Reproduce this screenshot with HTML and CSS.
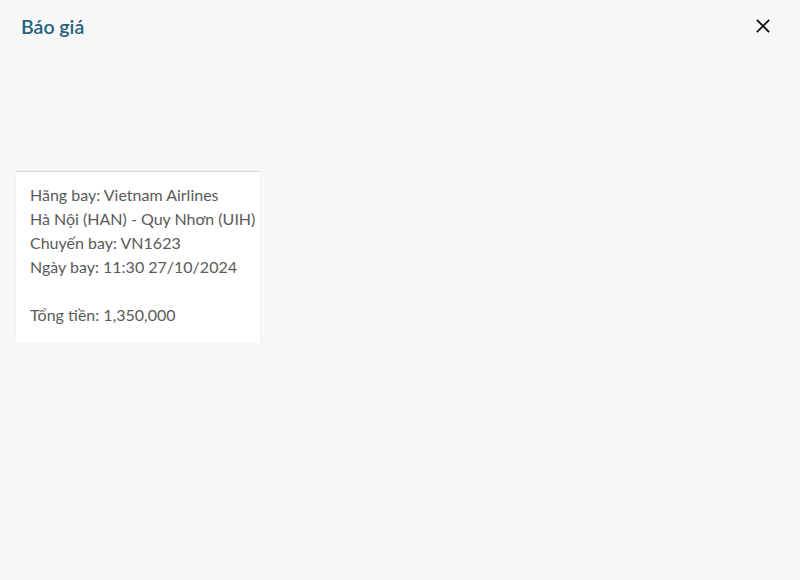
FILE: index.html
```html
<!DOCTYPE html>
<html lang="vi">
<head>
<meta charset="utf-8">
<title>Báo giá</title>
<link rel="stylesheet" href="styles.css">
</head>
<body>
<div class="dialog">
  <header class="header">
    <h1 class="title">Báo giá</h1>
    <button class="close" aria-label="Đóng">
      <svg width="14" height="14" viewBox="0 0 14 14"><path d="M1.5 1.5L12.5 12.5M12.5 1.5L1.5 12.5" stroke="#111" stroke-width="1.8" stroke-linecap="square"/></svg>
    </button>
  </header>
  <div class="content">
    <div class="card">
      <div>Hãng bay: Vietnam Airlines</div>
      <div>Hà Nội (HAN) - Quy Nhơn (UIH)</div>
      <div>Chuyến bay: VN1623</div>
      <div>Ngày bay: 11:30 27/10/2024</div>
      <div class="blank">&nbsp;</div>
      <div>Tổng tiền: 1,350,000</div>
    </div>
  </div>
</div>
</body>
</html>
```
FILE: styles.css
```css
html, body {
  margin: 0;
  padding: 0;
  background: #f7f7f7;
  font-family: Lato, "Noto Sans", sans-serif;
}
.dialog {
  width: 800px;
  height: 580px;
  background: #f7f7f7;
}
.header {
  display: flex;
  align-items: center;
  justify-content: space-between;
  padding: 12px 30px 0 21px;
  height: 28px;
}
.title {
  margin: 0;
  font-size: 19.5px;
  font-weight: 600;
  color: #1f6480;
}
.close {
  border: 0;
  background: none;
  padding: 0;
  width: 14px;
  height: 14px;
  display: flex;
  cursor: pointer;
}
.content {
  padding: 132px 0 0 16px;
}
.card {
  width: 230px;
  padding: 11px 0 16px 14px;
  background: #fff;
  box-shadow: 0 -1px 1px rgba(0,0,0,0.12);
  font-size: 16px;
  line-height: 24px;
  color: #5a5a5a;
  white-space: nowrap;
}
```
